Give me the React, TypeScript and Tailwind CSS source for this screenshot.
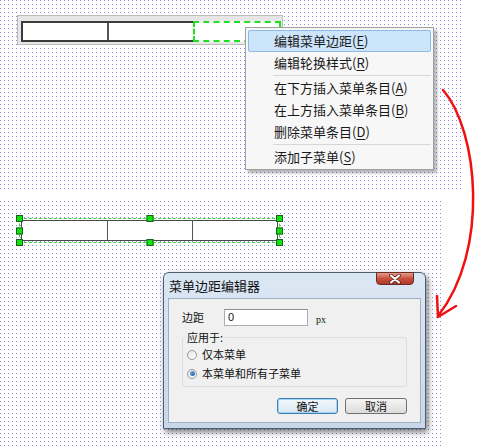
import React from 'react';

const dots =
  'bg-white [background-image:conic-gradient(at_1px_1px,transparent_75%,#8a8aee_0)] [background-size:4px_4px]';

const cjk = "font-['Noto_Sans_CJK_SC','Noto_Sans',sans-serif]";

const menuItems = [
  { label: '编辑菜单边距', key: 'E', active: true },
  { label: '编辑轮换样式', key: 'R' },
  { sep: true },
  { label: '在下方插入菜单条目', key: 'A' },
  { label: '在上方插入菜单条目', key: 'B' },
  { label: '删除菜单条目', key: 'D' },
  { sep: true },
  { label: '添加子菜单', key: 'S' },
];

const Handle = ({ pos }: { pos: string }) => (
  <span className={`absolute w-[7px] h-[7px] bg-[#12e212] border border-[#1d5e1d] ${pos}`} />
);

const Radio = ({ checked }: { checked?: boolean }) => (
  <span className="flex items-center justify-center w-[10px] h-[10px] rounded-full border border-[#9a9a9a] bg-gradient-to-br from-[#e4e4e4] to-[#ffffff]">
    {checked && (
      <span className="w-[5px] h-[5px] rounded-full bg-gradient-to-br from-[#6fb0ea] to-[#1b5ea8]" />
    )}
  </span>
);

const App = () => {
  return (
    <div className={`relative w-[480px] h-[448px] bg-white overflow-hidden ${cjk}`}>
      {/* top canvas */}
      <div className={`relative w-[461px] h-[191px] ${dots}`}>
        <div className="ml-[17px] pt-[15px]">
          <div className="w-[266px] h-[30px] border border-[#bdbdbd] bg-[#e6e6e6] pt-[5px] pb-[2px] pl-[3px] pr-[1px]">
            <div className="flex h-full border-2 border-[#3b3b3b] bg-white">
              <div className="w-[86px] border-r-2 border-[#555]" />
              <div className="w-[84px]" />
              <div className="flex-1 -my-[2px] -mr-[2px] border-2 border-dashed border-[#1fe01f] bg-white" />
            </div>
          </div>
        </div>

        {/* context menu */}
        <div className="absolute left-[245px] top-[27px] w-[189px] pt-[2px] pb-[1px] px-[2px] bg-[#f7f7f7] border border-[#a0a0a0] shadow-[3px_3px_3px_rgba(0,0,0,0.3)] text-[13px] text-[#1a1a1a]">
          {menuItems.map((it, i) =>
            it.sep ? (
              <div key={i} className="h-[3px] pl-[25px] flex items-center">
                <div className="w-full h-px bg-[#d7d7d7]" />
              </div>
            ) : (
              <div
                key={i}
                className={`h-[22px] flex items-center pl-[25px] rounded-[2px] border ${
                  it.active ? 'bg-[#cde5fa] border-[#8cbbe8]' : 'border-transparent'
                }`}
              >
                {it.label}(<span className="underline underline-offset-2">{it.key}</span>)
              </div>
            )
          )}
        </div>
      </div>

      {/* bottom canvas */}
      <div className={`relative mt-[10px] w-[443px] h-[247px] ${dots}`}>
        <div className="ml-[19px] pt-[17px]">
          <div className="relative w-[261px] h-[25px] border border-dashed border-[#3fd03f] p-px">
            <div className="flex h-full border border-[#4a4a4a] bg-white">
              <div className="w-[86px] border-r border-[#555]" />
              <div className="w-[85px] border-r border-[#555]" />
              <div className="flex-1" />
            </div>
            <Handle pos="-left-[4px] -top-[4px]" />
            <Handle pos="left-1/2 -translate-x-1/2 -top-[4px]" />
            <Handle pos="-right-[4px] -top-[4px]" />
            <Handle pos="-left-[4px] top-1/2 -translate-y-1/2" />
            <Handle pos="-right-[4px] top-1/2 -translate-y-1/2" />
            <Handle pos="-left-[4px] -bottom-[4px]" />
            <Handle pos="left-1/2 -translate-x-1/2 -bottom-[4px]" />
            <Handle pos="-right-[4px] -bottom-[4px]" />
          </div>
        </div>

        {/* dialog window */}
        <div className="absolute left-[163px] top-[71px] w-[263px] h-[157px] flex flex-col rounded-t-[6px] border border-[#4b5d70] bg-gradient-to-b from-[#dce7f4] to-[#c9d8e9] shadow-[2px_3px_6px_rgba(0,0,0,0.55)] px-[4px] pb-[5px]">
          <div className="relative h-[25px] flex items-center pl-px text-[13px] text-[#111]">
            菜单边距编辑器
            <div className="absolute right-[7px] -top-px w-[38px] h-[13px] rounded-b-[4px] border border-[#6b2b22] bg-gradient-to-b from-[#e49a8c] via-[#c9503f] to-[#b03a28] flex items-center justify-center">
              <svg width="12" height="10" viewBox="0 0 12 10">
                <path d="M2 1.5 L10 8.5 M10 1.5 L2 8.5" stroke="#5a1f18" strokeWidth="3.6" strokeLinecap="round" />
                <path d="M2 1.5 L10 8.5 M10 1.5 L2 8.5" stroke="#fff" strokeWidth="2" strokeLinecap="round" />
              </svg>
            </div>
          </div>

          <div className="flex-1 flex flex-col border border-[#9fb0c2] bg-[#f0f0f0] px-[13px] pt-[9px] text-[11px] text-[#111]">
            <div className="flex items-center">
              <span className="w-[42px]">边距</span>
              <div className="w-[84px] h-[17px] border border-[#abadb3] border-t-[#8c8f94] bg-white flex items-center pl-[3px] text-[11px] font-['Liberation_Sans',sans-serif]">
                0
              </div>
              <span className="ml-[8px] mt-[4px] text-[10px] font-['Liberation_Serif',serif]">px</span>
            </div>

            <div className="relative mt-[10px] h-[50px] border border-[#d5dfe5] rounded-[3px] flex flex-col gap-[8px] pl-[4px] pt-[11px]">
              <span className="absolute -top-[9px] left-[2px] px-[2px] bg-[#f0f0f0] leading-[16px]">应用于:</span>
              <div className="flex items-center gap-[5px] h-[11px]">
                <Radio />
                <span>仅本菜单</span>
              </div>
              <div className="flex items-center gap-[5px] h-[11px]">
                <Radio checked />
                <span>本菜单和所有子菜单</span>
              </div>
            </div>

            <div className="flex justify-end gap-[7px] mt-[11px]">
              <button className="w-[61px] h-[16px] rounded-[3px] border border-[#3c7fb1] bg-gradient-to-b from-[#f2f8fc] to-[#d8e8f4] shadow-[inset_0_0_0_1px_#a6d4f0] text-[11px] leading-none">
                确定
              </button>
              <button className="w-[62px] h-[16px] rounded-[3px] border border-[#707070] bg-gradient-to-b from-[#f4f4f4] to-[#dcdcdc] text-[11px] leading-none">
                取消
              </button>
            </div>
          </div>
        </div>
      </div>

      {/* red arrow */}
      <svg className="absolute left-0 top-0 pointer-events-none" width="480" height="448" viewBox="0 0 480 448">
        <path d="M443 90 C478 130 490 250 438 316" fill="none" stroke="#f01010" strokeWidth="2.5" strokeLinecap="round" />
        <path d="M437 296 L438 317 L456 306" fill="none" stroke="#f01010" strokeWidth="2.5" strokeLinecap="round" strokeLinejoin="round" />
      </svg>
    </div>
  );
};

export default App;
